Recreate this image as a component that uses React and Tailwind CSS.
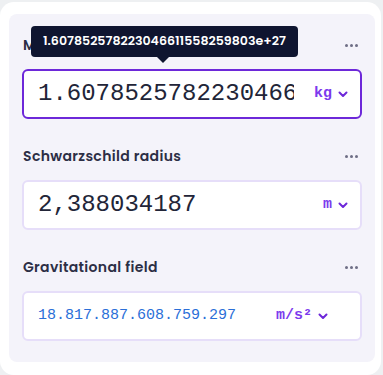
const sans = { fontFamily: 'Poppins, Inter, "Noto Sans", sans-serif' };

function Chevron() {
  return (
    <svg width="10" height="7" viewBox="0 0 10 7" fill="none" className="ml-[6px]">
      <path d="M1.5 1.5 L5 5 L8.5 1.5" stroke="#6d28d9" strokeWidth="2" strokeLinecap="round" strokeLinejoin="round" />
    </svg>
  );
}

function Dots() {
  return (
    <div className="flex items-center gap-[2px] pr-[4px]">
      <span className="block h-[3px] w-[3px] rounded-full bg-[#6e6e85]" />
      <span className="block h-[3px] w-[3px] rounded-full bg-[#6e6e85]" />
      <span className="block h-[3px] w-[3px] rounded-full bg-[#6e6e85]" />
    </div>
  );
}

function Field({ label, value, unit, active, small, unitPad, children }) {
  return (
    <div className="relative">
      <div className="flex h-[20px] items-center justify-between pl-[1px]">
        <span className="text-[14px] font-semibold tracking-[0.35px] text-[#2c2e45]" style={sans}>{label}</span>
        <Dots />
      </div>
      <div
        className={`mt-[14px] flex h-[50px] items-center rounded-[6px] border-2 bg-white pl-[14px] ${
          active ? 'border-[#6d28d9]' : 'border-[#e6def9]'
        }`}
        style={{ paddingRight: unitPad }}
      >
        <div
          className={`min-w-0 flex-1 overflow-hidden whitespace-nowrap font-['Liberation_Mono',monospace] ${
            small ? 'text-[15px] text-[#2b6fd8]' : 'text-[24px] text-[#222538]'
          }`}
        >
          {value}
        </div>
        <div className="ml-[20px] flex items-center font-['Liberation_Mono',monospace] text-[15px] font-bold text-[#7c3aed]">
          {unit}
          <Chevron />
        </div>
      </div>
      {children}
    </div>
  );
}

export default function App() {
  return (
    <div className="min-h-[375px] bg-[#eef0f2] pt-[2px] pr-[2px]">
      <div className="rounded-[14px] bg-white pl-[9px] pr-[6px] pt-[12px] pb-[13px]">
        <div className="flex flex-col gap-[27px] rounded-[8px] bg-[#f4f3fa] px-[13px] pt-[21px] pb-[21px]">
          <Field label="Mass" value="1.6078525782230466115582598" unit="kg" active unitPad="12px">
            <div className="absolute left-[9px] top-[-9px] z-10">
              <div className="rounded-[4px] bg-[#0f1530] px-[12px] py-[6px] text-[12.6px] font-semibold text-white" style={sans}>
                1.607852578223046611558259803e+27
              </div>
              <div className="ml-[126px] h-0 w-0 border-x-[6px] border-t-[6px] border-x-transparent border-t-[#0f1530]" />
            </div>
          </Field>
          <Field label="Schwarzschild radius" value="2,388034187" unit="m" unitPad="12px" />
          <Field label="Gravitational field" value="18.817.887.608.759.297" unit="m/s²" small unitPad="32px" />
        </div>
      </div>
    </div>
  );
}
